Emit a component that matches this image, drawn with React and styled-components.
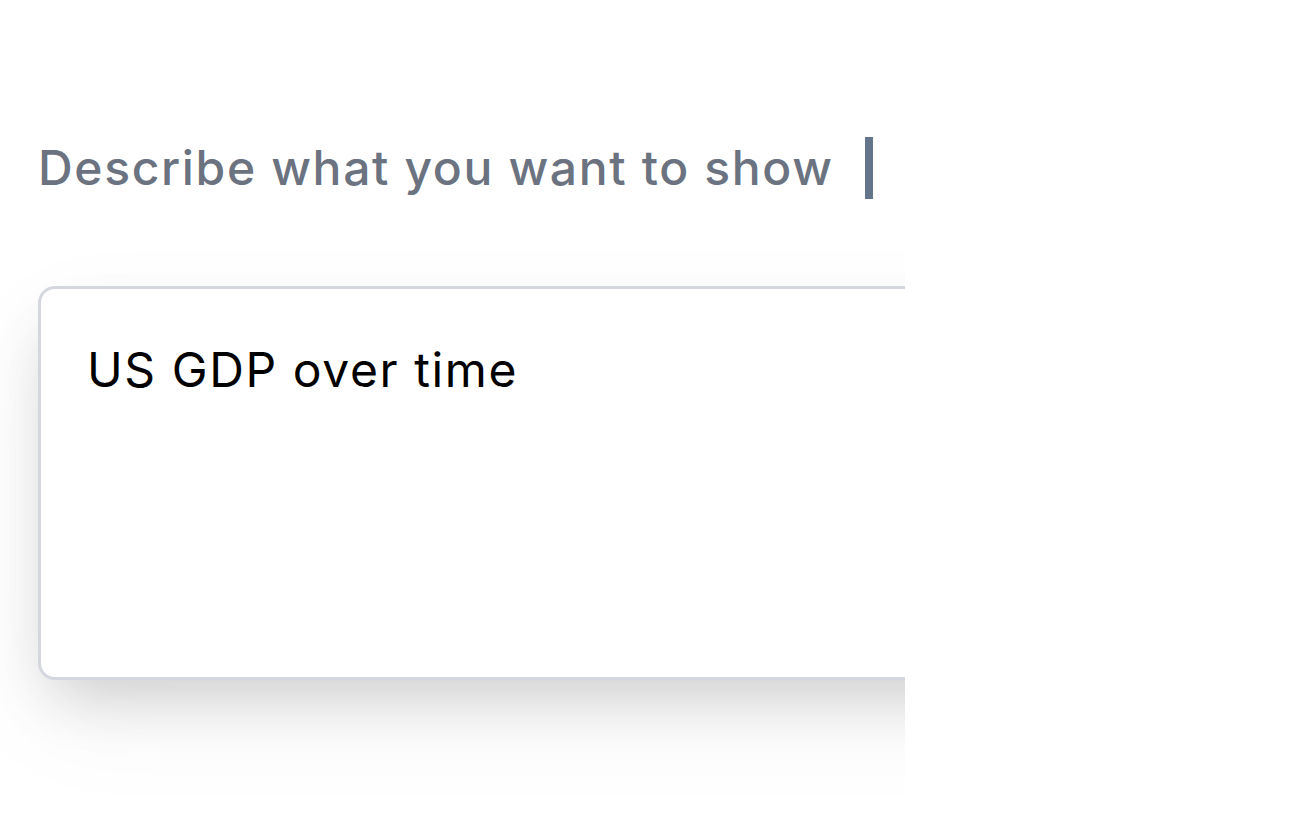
import React from "react";
import styled, { createGlobalStyle } from "styled-components";

const Global = createGlobalStyle`
  html, body { margin: 0; padding: 0; background: #ffffff; }
  body { font-family: Inter, "Liberation Sans", Arial, sans-serif; }
`;

const Frame = styled.div`
  width: 905px;
  height: 806px;
  overflow: hidden;
  border-bottom-right-radius: 22px;
  padding: 137px 0 0 38px;
  box-sizing: border-box;
  display: flex;
  flex-direction: column;
`;

const HeadingRow = styled.div`
  display: flex;
  align-items: center;
  gap: 31px;
  height: 62px;
`;

const Heading = styled.h1`
  margin: 0;
  font-family: Inter, "Liberation Sans", Arial, sans-serif;
  font-size: 48px;
  font-weight: 500;
  color: #6b7280;
  line-height: 62px;
  white-space: nowrap;
  letter-spacing: 1.65px;
`;

const Caret = styled.span`
  display: block;
  width: 8px;
  height: 62px;
  background: #64748b;
`;

const Card = styled.div`
  margin-top: 87px;
  width: 1000px;
  height: 394px;
  flex: none;
  box-sizing: border-box;
  border: 3px solid #d5d7df;
  border-radius: 17px;
  background: #fff;
  box-shadow: 0 30px 60px -14px rgba(0, 0, 0, 0.16), 0 40px 110px rgba(0, 0, 0, 0.05);
  padding: 51px 46px;
`;

const Prompt = styled.div`
  font-size: 48px;
  line-height: 60px;
  color: #000;
  white-space: nowrap;
  letter-spacing: 1.6px;
`;

export default function App() {
  return (
    <>
      <Global />
      <Frame>
        <HeadingRow>
          <Heading>Describe what you want to show</Heading>
          <Caret />
        </HeadingRow>
        <Card>
          <Prompt>US GDP over time</Prompt>
        </Card>
      </Frame>
    </>
  );
}
